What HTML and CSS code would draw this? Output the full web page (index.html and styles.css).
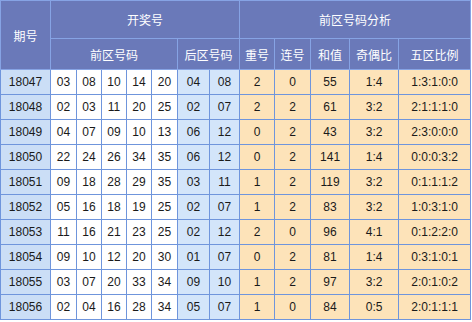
FILE: index.html
```html
<!DOCTYPE html>
<html>
<head>
<meta charset="utf-8">
<link rel="stylesheet" href="styles.css">
</head>
<body>
<table class="draw">
  <colgroup>
    <col class="c-issue">
    <col class="c-n26"><col class="c-n25"><col class="c-n25"><col class="c-n25"><col class="c-n26">
    <col class="c-b32"><col class="c-b30">
    <col class="c-a35"><col class="c-a36"><col class="c-a39"><col class="c-a49"><col class="c-a72">
  </colgroup>
  <thead>
    <tr class="h1">
      <th rowspan="2">期号</th>
      <th colspan="7">开奖号</th>
      <th colspan="5">前区号码分析</th>
    </tr>
    <tr class="h2">
      <th colspan="5">前区号码</th>
      <th colspan="2">后区号码</th>
      <th>重号</th><th>连号</th><th>和值</th><th>奇偶比</th><th>五区比例</th>
    </tr>
  </thead>
  <tbody>
    <tr><td class="issue">18047</td><td>03</td><td>08</td><td>10</td><td>14</td><td>20</td><td class="back">04</td><td class="back">08</td><td class="an">2</td><td class="an">0</td><td class="an">55</td><td class="an">1:4</td><td class="an">1:3:1:0:0</td></tr>
    <tr><td class="issue">18048</td><td>02</td><td>03</td><td>11</td><td>20</td><td>25</td><td class="back">02</td><td class="back">07</td><td class="an">2</td><td class="an">2</td><td class="an">61</td><td class="an">3:2</td><td class="an">2:1:1:1:0</td></tr>
    <tr><td class="issue">18049</td><td>04</td><td>07</td><td>09</td><td>10</td><td>13</td><td class="back">06</td><td class="back">12</td><td class="an">0</td><td class="an">2</td><td class="an">43</td><td class="an">3:2</td><td class="an">2:3:0:0:0</td></tr>
    <tr><td class="issue">18050</td><td>22</td><td>24</td><td>26</td><td>34</td><td>35</td><td class="back">06</td><td class="back">12</td><td class="an">0</td><td class="an">2</td><td class="an">141</td><td class="an">1:4</td><td class="an">0:0:0:3:2</td></tr>
    <tr><td class="issue">18051</td><td>09</td><td>18</td><td>28</td><td>29</td><td>35</td><td class="back">03</td><td class="back">11</td><td class="an">1</td><td class="an">2</td><td class="an">119</td><td class="an">3:2</td><td class="an">0:1:1:1:2</td></tr>
    <tr><td class="issue">18052</td><td>05</td><td>16</td><td>18</td><td>19</td><td>25</td><td class="back">02</td><td class="back">07</td><td class="an">1</td><td class="an">2</td><td class="an">83</td><td class="an">3:2</td><td class="an">1:0:3:1:0</td></tr>
    <tr><td class="issue">18053</td><td>11</td><td>16</td><td>21</td><td>23</td><td>25</td><td class="back">02</td><td class="back">12</td><td class="an">2</td><td class="an">0</td><td class="an">96</td><td class="an">4:1</td><td class="an">0:1:2:2:0</td></tr>
    <tr><td class="issue">18054</td><td>09</td><td>10</td><td>12</td><td>20</td><td>30</td><td class="back">01</td><td class="back">07</td><td class="an">0</td><td class="an">2</td><td class="an">81</td><td class="an">1:4</td><td class="an">0:3:1:0:1</td></tr>
    <tr><td class="issue">18055</td><td>03</td><td>07</td><td>20</td><td>33</td><td>34</td><td class="back">09</td><td class="back">10</td><td class="an">1</td><td class="an">2</td><td class="an">97</td><td class="an">3:2</td><td class="an">2:0:1:0:2</td></tr>
    <tr><td class="issue">18056</td><td>02</td><td>04</td><td>16</td><td>28</td><td>34</td><td class="back">05</td><td class="back">07</td><td class="an">1</td><td class="an">0</td><td class="an">84</td><td class="an">0:5</td><td class="an">2:0:1:1:1</td></tr>
  </tbody>
</table>
</body>
</html>
```
FILE: styles.css
```css
html, body {
  margin: 0;
  padding: 0;
  background: #ffffff;
}
.draw {
  border-collapse: collapse;
  table-layout: fixed;
  width: 471px;
  font-family: "Liberation Sans", Arial, "Noto Sans CJK SC", sans-serif;
  font-size: 12px;
  color: #1a1a1a;
}
.c-issue { width: 50px; }
.c-n26 { width: 26px; }
.c-n25 { width: 25px; }
.c-b32 { width: 32px; }
.c-b30 { width: 30px; }
.c-a35 { width: 35px; }
.c-a36 { width: 36px; }
.c-a39 { width: 39px; }
.c-a49 { width: 49px; }
.c-a72 { width: 72px; }
.draw th, .draw td {
  padding: 0;
  text-align: center;
  vertical-align: middle;
  border: 1px solid #6f95dc;
  white-space: nowrap;
  overflow: hidden;
}
.draw th {
  background: #6a79b9;
  color: #ffffff;
  font-weight: normal;
  border-color: #86a3e4;
}
.h1 th { height: 37px; }
.h2 th { height: 30px; }
.draw tbody td { height: 24px; background: #ffffff; }
.draw tbody td.issue { background: #cbdef6; }
.draw tbody td.back { background: #d3e5fa; }
.draw tbody td.an { background: #fde3b9; }
```
